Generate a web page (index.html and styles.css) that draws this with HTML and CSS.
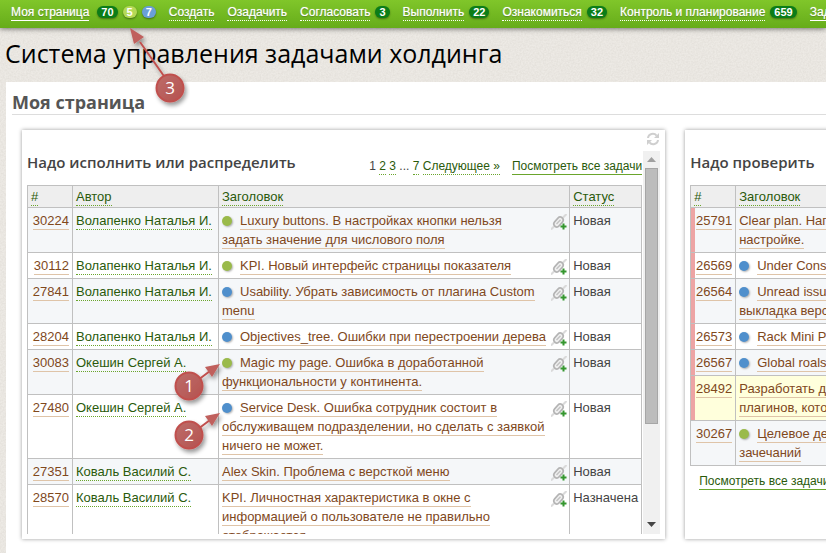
FILE: index.html
```html
<!DOCTYPE html>
<html lang="ru">

<head>
    <meta charset="UTF-8" />
    <title>Система управления задачами холдинга</title>
    <meta name="viewport" content="width=device-width, initial-scale=1.0" />
    <link rel="stylesheet" href="styles.css">
</head>

<body>

    <!-- Icons -->
    <svg class="defs" width="0" height="0">
        <symbol id="plug" viewBox="0 0 16 16">
            <path d="M0 15.500 L4 11.500" stroke="#dadada" stroke-width="2" />
            <path d="M11 4.500 L15.500 0" stroke="#dadada" stroke-width="2" />
            <rect x="2" y="5" width="11" height="6" rx="3" transform="rotate(-48 7.500 8)" fill="#f0f0f0" stroke="#b4b4b4" stroke-width="1.600" />
            <path d="M5.500 10 L9.500 5.800" stroke="#c2c2c2" stroke-width="1.400" />
            <path d="M12.500 9.500v6M9.500 12.500h6" stroke="#35962f" stroke-width="2" />
        </symbol>
        <symbol id="refresh" viewBox="0 0 14 14">
            <path d="M2 6 C2.4 1.6 8 0.4 10.6 3.6 M12 8 C11.6 12.4 6 13.6 3.4 10.4" fill="none" stroke="#cfcfcf" stroke-width="2" />
            <path d="M13 1v5H8z M1 13V8h5z" fill="#cfcfcf" />
        </symbol>
        <linearGradient id="ball" x1="0" y1="0" x2="1" y2="1">
            <stop offset="0" stop-color="#bd6d6a" />
            <stop offset="1" stop-color="#b5524f" />
        </linearGradient>
        <filter id="ball-shadow" x="-50%" y="-50%" width="200%" height="200%">
            <feDropShadow dx="2" dy="3" stdDeviation="2" flood-color="#000" flood-opacity="0.4" />
        </filter>
        <filter id="paper">
            <feTurbulence type="fractalNoise" baseFrequency="0.6" numOctaves="2" />
            <feColorMatrix values="0 0 0 0 0.4  0 0 0 0 0.37  0 0 0 0 0.32  0.25 0 0 0 -0.07" />
        </filter>
    </svg>

    <svg class="grain" aria-hidden="true">
        <rect width="100%" height="100%" filter="url(#paper)" />
    </svg>

    <!-- Top menu -->
    <nav class="menu">
        <div class="item"><a class="solid" href="#">Моя страница</a>
            <div class="badges"><span class="badge">70</span><span class="badge lime">5</span><span class="badge blue">7</span></div>
        </div>
        <div class="item"><a href="#">Создать</a></div>
        <div class="item"><a href="#">Озадачить</a></div>
        <div class="item"><a href="#">Согласовать</a><span class="badge">3</span></div>
        <div class="item"><a href="#">Выполнить</a><span class="badge">22</span></div>
        <div class="item"><a href="#">Ознакомиться</a><span class="badge">32</span></div>
        <div class="item"><a href="#">Контроль и планирование</a><span class="badge">659</span></div>
        <div class="item"><a class="solid" href="#">Задачи</a></div>
    </nav>

    <h1>Система управления задачами холдинга</h1>

    <main class="content">
        <h2>Моя страница</h2>

        <div class="panels">
            <section class="panel">
                <div class="panel-top">
                    <svg width="14" height="14"><use href="#refresh" /></svg>
                </div>
                <div class="scroll">
                    <div class="scroll-body">
                        <div class="panel-head">
                            <h3>Надо исполнить или распределить</h3>
                            <div class="pager">1 <a href="#">2</a> <a href="#">3</a> ... <a href="#">7</a> <a href="#">Следующее »</a></div>
                            <div class="pager"><a class="all" href="#">Посмотреть все задачи</a></div>
                        </div>
                        <table class="tasks">
                            <thead>
                                <tr>
                                    <th class="id"><a href="#">#</a></th>
                                    <th class="author"><a href="#">Автор</a></th>
                                    <th><a href="#">Заголовок</a></th>
                                    <th class="status"><a href="#">Статус</a></th>
                                </tr>
                            </thead>
                            <tbody>
                                <tr>
                                    <td class="num"><a href="#">30224</a></td>
                                    <td><a class="user" href="#">Волапенко Наталья И.</a></td>
                                    <td class="title"><svg class="plug"><use href="#plug" /></svg><i class="dot green"></i><a href="#">Luxury buttons. В настройках кнопки нельзя<br>задать значение для числового поля</a></td>
                                    <td>Новая</td>
                                </tr>
                                <tr>
                                    <td class="num"><a href="#">30112</a></td>
                                    <td><a class="user" href="#">Волапенко Наталья И.</a></td>
                                    <td class="title"><svg class="plug"><use href="#plug" /></svg><i class="dot green"></i><a href="#">KPI. Новый интерфейс страницы показателя</a></td>
                                    <td>Новая</td>
                                </tr>
                                <tr>
                                    <td class="num"><a href="#">27841</a></td>
                                    <td><a class="user" href="#">Волапенко Наталья И.</a></td>
                                    <td class="title"><svg class="plug"><use href="#plug" /></svg><i class="dot"></i><a href="#">Usability. Убрать зависимость от плагина Custom<br>menu</a></td>
                                    <td>Новая</td>
                                </tr>
                                <tr>
                                    <td class="num"><a href="#">28204</a></td>
                                    <td><a class="user" href="#">Волапенко Наталья И.</a></td>
                                    <td class="title"><svg class="plug"><use href="#plug" /></svg><i class="dot"></i><a href="#">Objectives_tree. Ошибки при перестроении дерева</a></td>
                                    <td>Новая</td>
                                </tr>
                                <tr>
                                    <td class="num"><a href="#">30083</a></td>
                                    <td><a class="user" href="#">Окешин Сергей А.</a></td>
                                    <td class="title"><svg class="plug"><use href="#plug" /></svg><i class="dot green"></i><a href="#">Magic my page. Ошибка в доработанной<br>функциональности у континента.</a></td>
                                    <td>Новая</td>
                                </tr>
                                <tr>
                                    <td class="num"><a href="#">27480</a></td>
                                    <td><a class="user" href="#">Окешин Сергей А.</a></td>
                                    <td class="title"><svg class="plug"><use href="#plug" /></svg><i class="dot"></i><a href="#">Service Desk. Ошибка сотрудник состоит в<br>обслуживащем подразделении, но сделать с заявкой<br>ничего не может.</a></td>
                                    <td>Новая</td>
                                </tr>
                                <tr>
                                    <td class="num"><a href="#">27351</a></td>
                                    <td><a class="user" href="#">Коваль Василий С.</a></td>
                                    <td class="title"><svg class="plug"><use href="#plug" /></svg><a href="#">Alex Skin. Проблема с версткой меню</a></td>
                                    <td>Новая</td>
                                </tr>
                                <tr>
                                    <td class="num"><a href="#">28570</a></td>
                                    <td><a class="user" href="#">Коваль Василий С.</a></td>
                                    <td class="title"><svg class="plug"><use href="#plug" /></svg><a href="#">KPI. Личностная характеристика в окне с<br>информацией о пользователе не правильно<br>отображается</a></td>
                                    <td>Назначена</td>
                                </tr>
                            </tbody>
                        </table>
                    </div>
                    <div class="bar">
                        <svg width="9" height="5"><path d="M0 5L4.500 0L9 5z" fill="#a0a0a0" /></svg>
                        <div class="thumb"></div>
                        <svg width="9" height="5"><path d="M0 0L4.500 5L9 0z" fill="#454545" /></svg>
                    </div>
                </div>
            </section>

            <section class="panel">
                <div class="panel-top"></div>
                <div class="panel-head">
                    <h3>Надо проверить</h3>
                </div>
                <table class="tasks">
                    <thead>
                        <tr>
                            <th class="id"><a href="#">#</a></th>
                            <th><a href="#">Заголовок</a></th>
                        </tr>
                    </thead>
                    <tbody>
                        <tr>
                            <td class="num late"><a href="#">25791</a></td>
                            <td><a href="#">Clear plan. Написать инструкцию по<br>настройке.</a></td>
                        </tr>
                        <tr>
                            <td class="num late"><a href="#">26569</a></td>
                            <td><i class="dot"></i><a href="#">Under Construction</a></td>
                        </tr>
                        <tr>
                            <td class="num late"><a href="#">26564</a></td>
                            <td><i class="dot"></i><a href="#">Unread issues. Подготовка и<br>выкладка версии</a></td>
                        </tr>
                        <tr>
                            <td class="num late"><a href="#">26573</a></td>
                            <td><i class="dot"></i><a href="#">Rack Mini Profiler</a></td>
                        </tr>
                        <tr>
                            <td class="num late"><a href="#">26567</a></td>
                            <td><i class="dot"></i><a href="#">Global roals</a></td>
                        </tr>
                        <tr class="hot">
                            <td class="num late"><a href="#">28492</a></td>
                            <td><a href="#">Разработать два новых<br>плагинов, которые</a></td>
                        </tr>
                        <tr>
                            <td class="num"><a href="#">30267</a></td>
                            <td><i class="dot green"></i><a href="#">Целевое деление и<br>зачечаний</a></td>
                        </tr>
                    </tbody>
                </table>
                <div class="panel-foot"><a class="all" href="#">Посмотреть все задачи</a></div>
            </section>
        </div>
    </main>

    <!-- Numbered callouts -->
    <svg class="callout c3" width="64" height="86">
        <g filter="url(#ball-shadow)">
            <path d="M40 55L14 18" stroke="#c0504d" stroke-width="2" />
            <path d="M4 4L18 13L8 20z" fill="#c0605d" />
            <circle cx="44" cy="64" r="13.500" fill="url(#ball)" stroke="#c0504d" stroke-width="2" />
        </g>
        <text x="44" y="70">3</text>
    </svg>
    <svg class="callout c1" width="64" height="50">
        <g filter="url(#ball-shadow)">
            <path d="M28 20L40 11" stroke="#c0504d" stroke-width="2" />
            <path d="M50 4L42 17L35 7z" fill="#c0605d" />
            <circle cx="19" cy="26" r="13.500" fill="url(#ball)" stroke="#c0504d" stroke-width="2" />
        </g>
        <text x="19" y="32">1</text>
    </svg>
    <svg class="callout c2" width="64" height="50">
        <g filter="url(#ball-shadow)">
            <path d="M28 20L40 11" stroke="#c0504d" stroke-width="2" />
            <path d="M50 4L42 17L35 7z" fill="#c0605d" />
            <circle cx="19" cy="26" r="13.500" fill="url(#ball)" stroke="#c0504d" stroke-width="2" />
        </g>
        <text x="19" y="32">2</text>
    </svg>

</body>

</html>
```

FILE: styles.css
```css
body {
    position: relative;
    margin: 0;
    font: 13px/19px 'Liberation Sans', Arial, sans-serif;
    color: #444;
    background: #edeae5;
    overflow: hidden;
}

a {
    color: #2a5a0b;
    text-decoration: none;
    border-bottom: 1px dotted #6aa52c;
    padding-bottom: 1px;
}

.defs {
    position: absolute;
}

.grain {
    position: absolute;
    top: 0;
    left: 0;
    width: 100%;
    height: 100%;
    z-index: -1;
}

.menu {
    display: flex;
    gap: 13px;
    height: 28px;
    padding-left: 11px;
    box-sizing: border-box;
    background: linear-gradient(#80c62a, #66ac1a);
    box-shadow: 0 1px 5px rgba(0, 0, 0, 0.5);
    font-size: 12px;
    white-space: nowrap;
}

.item {
    display: flex;
    align-items: flex-start;
    gap: 5px;
    padding-top: 5px;
}

.item a {
    color: #fff;
    line-height: 15px;
    border-bottom: 1px dotted #fff;
    padding-bottom: 0;
    text-shadow: 0 0 1px rgba(255, 255, 255, 0.6), 0 1px 1px rgba(0, 0, 0, 0.3);
}

.item .solid {
    border-bottom-style: solid;
}

.badges {
    display: flex;
    gap: 5px;
    padding-left: 3px;
}

.badge {
    margin-top: 1px;
    padding: 0 4px;
    border-radius: 6px;
    background: #0b7d18;
    color: #fff;
    font: bold 11px/12px 'Liberation Sans', Arial, sans-serif;
    box-shadow: 0 1px 2px rgba(0, 0, 0, 0.4);
}

.badge.lime {
    background: #b5d957;
}

.badge.blue {
    background: #6a9fd8;
}

h1,
h2,
h3 {
    margin: 0;
    font-family: 'Open Sans', 'Noto Sans', sans-serif;
    white-space: nowrap;
}

h1 {
    padding: 7px 5px 11px;
    font-size: 25px;
    line-height: 36px;
    font-weight: normal;
    color: #000;
}

.content {
    margin-left: 6px;
    padding: 9px 0 14px 6px;
    background: #fff;
}

h2 {
    border-bottom: 1px solid #ddd;
    font-size: 18px;
    line-height: 23px;
    color: #555;
}

.panels {
    display: flex;
    gap: 20px;
    padding: 15px 0 0 10px;
}

.panel {
    flex: 0 0 80%;
    box-sizing: border-box;
    padding: 0 5px 5px;
    box-shadow: 0 0 4px rgba(0, 0, 0, 0.4);
}

.panel-top {
    display: flex;
    justify-content: flex-end;
    height: 19px;
    padding-top: 2px;
}

.scroll {
    display: flex;
    height: 383px;
}

.scroll-body {
    flex: 1;
    min-width: 0;
    overflow: hidden;
    padding-right: 1px;
}

.panel-head {
    display: flex;
    gap: 12px;
    height: 34px;
    white-space: nowrap;
}

h3 {
    flex: 1;
    font-size: 15px;
    line-height: 22px;
    font-weight: 600;
    color: #444;
}

.pager {
    font-size: 12px;
    line-height: 30px;
}

.all {
    border-bottom-style: solid;
}

.bar {
    display: flex;
    flex-direction: column;
    align-items: center;
    justify-content: space-between;
    width: 17px;
    padding: 6px 0 7px;
    box-sizing: border-box;
    background: #f0f0f0;
}

.thumb {
    width: 13px;
    height: 256px;
    box-sizing: border-box;
    margin: 6px 0 auto;
    border: 1px solid #a6a6a6;
    background: #bcbcbc;
}

.tasks {
    width: 100%;
    table-layout: fixed;
    border-collapse: collapse;
}

.tasks th,
.tasks td {
    padding: 3px;
    border: 1px solid #c0c0c0;
    text-align: left;
    vertical-align: top;
    font-weight: normal;
    white-space: nowrap;
}

.tasks th {
    padding: 1px 3px;
    background: #eee;
}

.tasks .title {
    padding-right: 2px;
}

.tasks tr:nth-child(odd) td {
    background: #f5f7f9;
}

.tasks tr.hot td {
    background: #ffffdc;
}

.tasks td a {
    color: #80481c;
    border-bottom: 1px solid #dfc4a8;
}

.tasks td .user {
    color: #2a5a0b;
    border-bottom: 1px dotted #6aa52c;
}

.id {
    width: 38px;
}

.author {
    width: 139px;
}

.status {
    width: 65px;
}

.tasks .num {
    text-align: right;
}

.tasks .late {
    box-shadow: inset 4px 0 #eda4a4;
}

.dot {
    display: inline-block;
    width: 10px;
    height: 10px;
    margin-right: 8px;
    border-radius: 50%;
    background: #4f8fcc;
    box-shadow: 1px 1px 2px rgba(0, 0, 0, 0.3);
    vertical-align: -1px;
}

.dot.green {
    background: #9aba4a;
}

.plug {
    float: right;
    width: 16px;
    height: 16px;
    margin-top: 3px;
}

.panel-foot {
    padding: 6px 9px;
    font-size: 12px;
}

.callout {
    position: absolute;
}

.callout text {
    font: 17px 'Open Sans', sans-serif;
    fill: #fff;
    text-anchor: middle;
}

.c1 {
    left: 170px;
    top: 360px;
}

.c2 {
    left: 170px;
    top: 409px;
}

.c3 {
    left: 126px;
    top: 24px;
}
```
